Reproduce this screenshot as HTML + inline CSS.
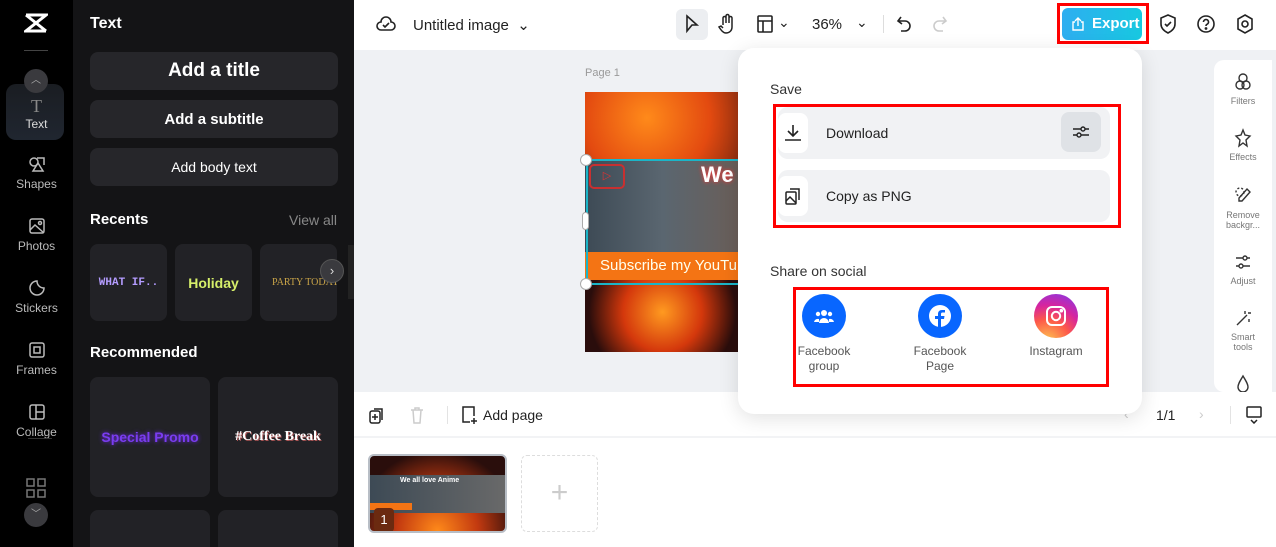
<!DOCTYPE html>
<html style="overflow:hidden;width:1276px;height:547px"><head><meta charset="utf-8"><style>
*{box-sizing:border-box;margin:0;padding:0}
body{width:1276px;height:547px;overflow:hidden;font-family:"Liberation Sans",sans-serif;background:#fff;position:relative}
.abs{position:absolute}
.rail{left:0;top:0;width:73px;height:547px;background:#000}
.panel{left:73px;top:0;width:281px;height:547px;background:#141416;color:#fff;overflow:hidden}
.btn{position:absolute;left:17px;width:248px;background:#26262a;border-radius:8px;display:flex;align-items:center;justify-content:center;font-weight:bold}
.ri{position:absolute;left:0;width:73px;text-align:center;color:#bbb;font-size:12px}
.ri svg{display:block;margin:0 auto 4px}
.card{position:absolute;background:#222226;border-radius:8px;display:flex;align-items:center;justify-content:center}
.top{left:354px;top:0;width:922px;height:50px;background:#fff}
.canvas{left:354px;top:50px;width:922px;height:342px;background:#eff1f4}
.tb{font-size:14px;color:#222}
.pop{left:738px;top:48px;width:404px;height:366px;background:#fff;border-radius:16px;box-shadow:0 4px 20px rgba(0,0,0,.12)}
.row{position:absolute;left:40px;width:332px;height:52px;background:#f1f2f4;border-radius:10px;display:flex;align-items:center;font-size:14px;color:#222}
.ico{width:30px;height:40px;background:#fff;border-radius:8px;display:flex;align-items:center;justify-content:center;margin-right:18px}
.red{position:absolute;border:3px solid #f00}
.soc{position:absolute;top:246px;width:90px;text-align:center;font-size:12px;color:#555;line-height:15px}
.soc .c{width:44px;height:44px;border-radius:50%;margin:0 auto 6px;display:flex;align-items:center;justify-content:center}
.rt{left:1214px;top:60px;width:58px;height:332px;background:#fff;border-radius:10px 0 0 10px;overflow:hidden}
.rt div{position:absolute;left:0;width:58px;text-align:center;font-size:9px;color:#777;line-height:10px}
.rt svg{display:block;margin:0 auto 4px}
</style></head><body>
<div class="abs rail">
 <svg class="abs" style="left:24px;top:13px" width="24" height="20" viewBox="0 0 24 20"><path d="M2 2h20L2 18h20" fill="none" stroke="#fff" stroke-width="3"/><path d="M2 2L22 18" stroke="#fff" stroke-width="3"/></svg>
 <div class="abs" style="left:24px;top:50px;width:24px;height:1px;background:#444"></div>
 <div class="abs" style="left:6px;top:84px;width:58px;height:56px;background:linear-gradient(#1a1d22,#202630);border-radius:10px"></div>
 <div class="abs" style="left:24px;top:69px;width:24px;height:24px;border-radius:50%;background:#3a3a3e;color:#aaa;font-size:10px;text-align:center;line-height:24px">︿</div>
 <div class="ri" style="top:96px"><span style="font-size:18px;color:#888;font-family:'Liberation Serif'">T</span><br><span style="color:#ddd">Text</span></div>
 <div class="ri" style="top:155px"><svg width="18" height="18" viewBox="0 0 18 18" fill="none" stroke="#bbb" stroke-width="1.5"><circle cx="6" cy="7" r="4"/><path d="M9 3h7v7M5 16l5-8 5 8z"/></svg>Shapes</div>
 <div class="ri" style="top:217px"><svg width="18" height="18" viewBox="0 0 18 18" fill="none" stroke="#bbb" stroke-width="1.5"><rect x="2" y="2" width="14" height="14" rx="2"/><path d="M2 13l5-5 9 8"/><circle cx="12" cy="6" r="1.5"/></svg>Photos</div>
 <div class="ri" style="top:279px"><svg width="18" height="18" viewBox="0 0 18 18" fill="none" stroke="#bbb" stroke-width="1.5"><path d="M16 9A7 7 0 1 1 9 2c0 4 3 7 7 7z"/></svg>Stickers</div>
 <div class="ri" style="top:341px"><svg width="18" height="18" viewBox="0 0 18 18" fill="none" stroke="#bbb" stroke-width="1.5"><rect x="2" y="2" width="14" height="14" rx="2"/><rect x="6" y="6" width="6" height="6"/></svg>Frames</div>
 <div class="ri" style="top:403px"><svg width="18" height="18" viewBox="0 0 18 18" fill="none" stroke="#bbb" stroke-width="1.5"><rect x="2" y="2" width="14" height="14" rx="2"/><path d="M8 2v14M8 9h8"/></svg>Collage</div>
 <div class="abs" style="left:28px;top:438px;width:24px;height:1px;background:#333"></div>
 <svg class="abs" style="left:26px;top:478px" width="20" height="20" viewBox="0 0 20 20" fill="none" stroke="#777" stroke-width="1.5"><rect x="1" y="1" width="7" height="7"/><rect x="12" y="1" width="7" height="7"/><rect x="1" y="12" width="7" height="7"/><rect x="12" y="12" width="7" height="7"/></svg>
 <div class="abs" style="left:24px;top:503px;width:24px;height:24px;border-radius:50%;background:#3a3a3e;color:#aaa;font-size:10px;text-align:center;line-height:24px">﹀</div>
</div>
<div class="abs panel">
 <div class="abs" style="left:17px;top:15px;font-weight:bold;font-size:16px">Text</div>
 <div class="btn" style="top:52px;height:38px;font-size:19px">Add a title</div>
 <div class="btn" style="top:100px;height:38px;font-size:15px">Add a subtitle</div>
 <div class="btn" style="top:148px;height:38px;font-size:14px;font-weight:normal">Add body text</div>
 <div class="abs" style="left:17px;top:211px;font-weight:bold;font-size:15px">Recents</div>
 <div class="abs" style="left:216px;top:212px;font-size:14px;color:#888">View all</div>
 <div class="card" style="left:17px;top:244px;width:77px;height:77px;color:#b49cff;font-family:'Liberation Mono';font-weight:bold;font-size:11px">WHAT IF..</div>
 <div class="card" style="left:102px;top:244px;width:77px;height:77px;color:#d6ef6a;font-weight:bold;font-size:14px">Holiday</div>
 <div class="card" style="left:187px;top:244px;width:77px;height:77px;color:#c9a448;font-family:'Liberation Serif';font-size:10px;justify-content:flex-start;padding-left:12px;white-space:nowrap;overflow:hidden">PARTY TODAY</div>
 <div class="abs" style="left:247px;top:259px;width:24px;height:24px;border-radius:50%;background:#3a3a3e;border:1px solid #555;color:#ddd;text-align:center;line-height:22px;font-size:13px">›</div>
 <div class="abs" style="left:17px;top:344px;font-weight:bold;font-size:15px">Recommended</div>
 <div class="card" style="left:17px;top:377px;width:120px;height:120px;color:#7a3cf0;font-weight:bold;font-size:14px;text-shadow:0 0 4px #6b2ce0">Special Promo</div>
 <div class="card" style="left:145px;top:377px;width:120px;height:120px;color:#fff;font-family:'Liberation Serif';font-weight:bold;font-size:14px;text-shadow:1px 1px 0 #a55">#Coffee Break</div>
 <div class="card" style="left:17px;top:510px;width:120px;height:37px;border-radius:8px 8px 0 0"></div>
 <div class="card" style="left:145px;top:510px;width:120px;height:37px;border-radius:8px 8px 0 0"></div>
</div>
<div class="abs" style="left:348px;top:245px;width:12px;height:54px;background:#222;border-radius:0 8px 8px 0"></div>
<div class="abs top">
 <svg class="abs" style="left:22px;top:15px" width="20" height="18" viewBox="0 0 20 18" fill="none" stroke="#222" stroke-width="1.6"><path d="M5 15a4 4 0 0 1 0-8 5 5 0 0 1 10 0 4 4 0 0 1 0 8z"/><path d="M7 10l2 2 4-4"/></svg>
 <div class="abs tb" style="left:59px;top:16px;font-size:15px">Untitled image &nbsp;⌄</div>
 <div class="abs" style="left:322px;top:9px;width:32px;height:31px;background:#eceef1;border-radius:6px"></div>
 <svg class="abs" style="left:330px;top:14px" width="16" height="20" viewBox="0 0 16 20" fill="none" stroke="#222" stroke-width="1.6"><path d="M3 2l10 9H8l-5 6z"/></svg>
 <svg class="abs" style="left:364px;top:13px" width="18" height="22" viewBox="0 0 18 22" fill="none" stroke="#222" stroke-width="1.5"><path d="M5 12V5a1.5 1.5 0 0 1 3 0v5V3a1.5 1.5 0 0 1 3 0v7V5a1.5 1.5 0 0 1 3 0v9c0 4-3 6-6 6s-5-3-7-6l2-1 2 2"/></svg>
 <svg class="abs" style="left:403px;top:15px" width="16" height="18" viewBox="0 0 16 18" fill="none" stroke="#222" stroke-width="1.6"><rect x="1" y="1" width="14" height="16" rx="1"/><path d="M1 6h14M6 6v11"/></svg>
 <div class="abs tb" style="left:424px;top:14px">⌄</div>
 <div class="abs tb" style="left:458px;top:16px;font-size:15px">36%</div>
 <div class="abs tb" style="left:502px;top:14px">⌄</div>
 <div class="abs" style="left:529px;top:15px;width:1px;height:18px;background:#ddd"></div>
 <svg class="abs" style="left:542px;top:15px" width="16" height="18" viewBox="0 0 16 18" fill="none" stroke="#222" stroke-width="1.6"><path d="M5 2L2 6l4 3M2 6h7a5 5 0 0 1 0 10H5"/></svg>
 <svg class="abs" style="left:578px;top:15px" width="16" height="18" viewBox="0 0 16 18" fill="none" stroke="#ccc" stroke-width="1.6"><path d="M11 2l3 4-4 3M14 6H7a5 5 0 0 0 0 10h4"/></svg>
 <div class="red" style="left:703px;top:3px;width:92px;height:41px"></div>
 <div class="abs" style="left:708px;top:8px;width:80px;height:32px;background:linear-gradient(90deg,#2eaef0,#17c8e0);border-radius:6px;color:#fff;font-size:15px;font-weight:bold;line-height:32px;padding-left:30px">Export</div>
 <svg class="abs" style="left:717px;top:17px" width="14" height="14" viewBox="0 0 14 14" fill="none" stroke="#fff" stroke-width="1.4"><path d="M4 5H2v8h10V5h-2M7 1v8M4 4l3-3 3 3"/></svg>
 <svg class="abs" style="left:805px;top:14px" width="18" height="20" viewBox="0 0 18 20" fill="none" stroke="#222" stroke-width="1.6"><path d="M9 1l7 3v6c0 4-3 7-7 9-4-2-7-5-7-9V4z"/><path d="M6 10l2 2 4-4"/></svg>
 <svg class="abs" style="left:842px;top:14px" width="20" height="20" viewBox="0 0 20 20" fill="none" stroke="#222" stroke-width="1.6"><circle cx="10" cy="10" r="8"/><path d="M7.5 8a2.5 2.5 0 1 1 3.5 2.3c-.7.3-1 .8-1 1.7"/><circle cx="10" cy="14.5" r=".6" fill="#222"/></svg>
 <svg class="abs" style="left:882px;top:14px" width="18" height="20" viewBox="0 0 18 20" fill="none" stroke="#222" stroke-width="1.6"><path d="M9 1l7 4v10l-7 4-7-4V5z"/><circle cx="9" cy="10" r="3"/></svg>
</div>
<div class="abs canvas">
 <div class="abs" style="left:231px;top:17px;font-size:11px;color:#999">Page 1</div>
 <div class="abs" style="left:231px;top:42px;width:155px;height:260px;background:radial-gradient(circle at 40% 10%,#ff8a1a 0,#e34a10 25%,#3a1210 55%),#2a0e0c;overflow:hidden">
  <div class="abs" style="left:0;top:160px;width:155px;height:100px;background:radial-gradient(circle at 50% 60%,#ff9a20,#d4380c 40%,#2a0d0c 75%)"></div>
  <div class="abs" style="left:0;top:68px;width:155px;height:92px;background:linear-gradient(90deg,#3d4a55,#5a6670 50%,#6a5e58)"></div>
  <div class="abs" style="left:4px;top:72px;width:36px;height:25px;border:2px solid #c83030;border-radius:5px;color:#d33;font-size:11px;text-align:center;line-height:21px">▷</div>
  <div class="abs" style="left:116px;top:70px;color:#fff;font-weight:bold;font-size:22px;text-shadow:0 0 4px #f33">We</div>
  <div class="abs" style="left:0;top:160px;width:155px;height:28px;background:#f47414;color:#ffe;font-size:15px;line-height:28px;padding-left:15px;white-space:nowrap">Subscribe my YouTube</div>
 </div>
 <div class="abs" style="left:232px;top:109px;width:160px;height:126px;border:2px solid #1bb5c8;border-right:none"></div>
 <div class="abs" style="left:226px;top:104px;width:12px;height:12px;border-radius:50%;background:#fff;border:1px solid #aaa"></div>
 <div class="abs" style="left:228px;top:162px;width:7px;height:18px;border-radius:4px;background:#fff;border:1px solid #aaa"></div>
 <div class="abs" style="left:226px;top:228px;width:12px;height:12px;border-radius:50%;background:#fff;border:1px solid #aaa"></div>
</div>
<div class="abs rt">
 <div style="top:12px"><svg width="18" height="20" viewBox="0 0 18 20" fill="none" stroke="#333" stroke-width="1.4"><circle cx="9" cy="6" r="4"/><circle cx="6" cy="13" r="4"/><circle cx="12" cy="13" r="4"/></svg>Filters</div>
 <div style="top:68px"><svg width="18" height="20" viewBox="0 0 18 20" fill="none" stroke="#333" stroke-width="1.4"><path d="M9 2l2 5 5 1-4 4 1 6-4-3-4 3 1-6-4-4 5-1z"/></svg>Effects</div>
 <div style="top:126px"><svg width="18" height="20" viewBox="0 0 18 20" fill="none" stroke="#333" stroke-width="1.4"><path d="M13 3l3 3-8 9H5v-3z"/><circle cx="6" cy="6" r="4" stroke-dasharray="2 2"/></svg>Remove<br>backgr...</div>
 <div style="top:192px"><svg width="18" height="20" viewBox="0 0 18 20" fill="none" stroke="#333" stroke-width="1.4"><path d="M2 6h14M2 14h14"/><circle cx="11" cy="6" r="2" fill="#fff"/><circle cx="7" cy="14" r="2" fill="#fff"/></svg>Adjust</div>
 <div style="top:248px"><svg width="18" height="20" viewBox="0 0 18 20" fill="none" stroke="#333" stroke-width="1.4"><path d="M3 17L13 7M11 3v3M14 5h3M15 11v3"/></svg>Smart<br>tools</div>
 <div style="top:314px"><svg width="18" height="20" viewBox="0 0 18 20" fill="none" stroke="#333" stroke-width="1.4"><path d="M9 2c-3 5-5 8-5 11a5 5 0 0 0 10 0c0-3-2-6-5-11z"/></svg></div>
</div>
<div class="abs" style="left:354px;top:392px;width:922px;height:46px;background:#fff;border-bottom:2px solid #f2f3f5">
 <svg class="abs" style="left:15px;top:14px" width="16" height="18" viewBox="0 0 16 18" fill="none" stroke="#222" stroke-width="1.5"><rect x="1" y="5" width="10" height="12" rx="2"/><path d="M5 3h8v11M6 8v6M3 11h6"/></svg>
 <svg class="abs" style="left:56px;top:14px" width="14" height="18" viewBox="0 0 14 18" fill="none" stroke="#ccc" stroke-width="1.5"><path d="M1 4h12M5 4V2h4v2M3 4l1 13h6l1-13"/></svg>
 <div class="abs" style="left:93px;top:14px;width:1px;height:18px;background:#e3e3e3"></div>
 <svg class="abs" style="left:106px;top:13px" width="18" height="20" viewBox="0 0 18 20" fill="none" stroke="#222" stroke-width="1.5"><path d="M10 17H3V2h11v9M14 13v6M11 16h6"/></svg>
 <div class="abs" style="left:129px;top:15px;font-size:14px;color:#222">Add page</div>
 <div class="abs" style="left:770px;top:14px;color:#ccc;font-size:14px">‹</div>
 <div class="abs" style="left:802px;top:15px;font-size:14px;color:#222">1/1</div>
 <div class="abs" style="left:845px;top:14px;color:#ccc;font-size:14px">›</div>
 <div class="abs" style="left:876px;top:14px;width:1px;height:18px;background:#e3e3e3"></div>
 <svg class="abs" style="left:891px;top:14px" width="18" height="18" viewBox="0 0 18 18" fill="none" stroke="#222" stroke-width="1.5"><rect x="2" y="1" width="14" height="10" rx="1"/><path d="M6 14l3 3 3-3"/></svg>
</div>
<div class="abs" style="left:368px;top:454px;width:139px;height:79px;border:2px solid #b8bec6;border-radius:6px;overflow:hidden;background:radial-gradient(circle at 50% 100%,#ff8a1a,#c33a10 40%,#2a0e0c 80%)">
 <div class="abs" style="left:0;top:19px;width:139px;height:38px;background:linear-gradient(90deg,#3d4a55,#6a6a6a)"></div>
 <div class="abs" style="left:30px;top:21px;color:#fff;font-size:7px;font-weight:bold">We all love Anime</div>
 <div class="abs" style="left:0;top:47px;width:42px;height:7px;background:#f47414"></div>
 <div class="abs" style="left:4px;top:52px;width:20px;height:24px;background:#6b2a10;border-radius:4px;color:#fff;font-size:13px;text-align:center;line-height:24px">1</div>
</div>
<div class="abs" style="left:521px;top:455px;width:77px;height:77px;border:1px dashed #ddd;border-radius:6px;color:#ccc;font-size:30px;text-align:center;line-height:74px;font-weight:200">+</div>
<div class="abs pop">
 <div class="abs" style="left:32px;top:33px;font-size:14px;color:#333">Save</div>
 <div class="row" style="top:59px"><div class="ico"><svg width="18" height="18" viewBox="0 0 18 18" fill="none" stroke="#222" stroke-width="1.6"><path d="M9 1v11M4 7l5 5 5-5M1 16h16"/></svg></div>Download
  <div class="abs" style="right:9px;top:5px;width:40px;height:40px;background:#dfe2e6;border-radius:8px"><svg style="margin:11px" width="18" height="18" viewBox="0 0 18 18" fill="none" stroke="#222" stroke-width="1.4"><path d="M1 6h16M1 12h16"/><circle cx="11" cy="6" r="2" fill="#dfe2e6"/><circle cx="7" cy="12" r="2" fill="#dfe2e6"/></svg></div></div>
 <div class="row" style="top:122px"><div class="ico"><svg width="16" height="18" viewBox="0 0 16 18" fill="none" stroke="#222" stroke-width="1.5"><rect x="1" y="5" width="10" height="12" rx="1"/><path d="M5 2h9v11M1 14l4-4 6 6"/></svg></div>Copy as PNG</div>
 <div class="red" style="left:35px;top:56px;width:348px;height:124px"></div>
 <div class="abs" style="left:32px;top:215px;font-size:14px;color:#333">Share on social</div>
 <div class="red" style="left:55px;top:239px;width:316px;height:100px"></div>
 <div class="soc" style="left:41px;top:246px"><div class="c" style="background:#0866ff"><svg width="20" height="16" viewBox="0 0 20 16" fill="#fff"><circle cx="10" cy="5" r="3"/><circle cx="4" cy="6" r="2.2"/><circle cx="16" cy="6" r="2.2"/><path d="M5 15a5 5 0 0 1 10 0zM0 14a4 4 0 0 1 5-3v3zM20 14a4 4 0 0 0-5-3v3z"/></svg></div>Facebook<br>group</div>
 <div class="soc" style="left:157px;top:246px"><div class="c" style="background:#0866ff"><svg width="24" height="24" viewBox="0 0 24 24"><circle cx="12" cy="12" r="11" fill="#fff"/><path d="M13 23v-8h3l.5-3H13v-2c0-1 .5-1.5 1.5-1.5H17V6h-3c-2.5 0-4 1.5-4 4v2H7v3h3v8z" fill="#0866ff"/></svg></div>Facebook<br>Page</div>
 <div class="soc" style="left:273px;top:246px"><div class="c" style="background:radial-gradient(circle at 30% 110%,#fdcb52 0,#fd5949 40%,#d6249f 65%,#7a3cf0 100%)"><svg width="24" height="24" viewBox="0 0 24 24" fill="none" stroke="#fff" stroke-width="2"><rect x="3" y="3" width="18" height="18" rx="5"/><circle cx="12" cy="12" r="4.2"/><circle cx="17.3" cy="6.7" r=".8" fill="#fff"/></svg></div>Instagram</div>
</div>
</body></html>
